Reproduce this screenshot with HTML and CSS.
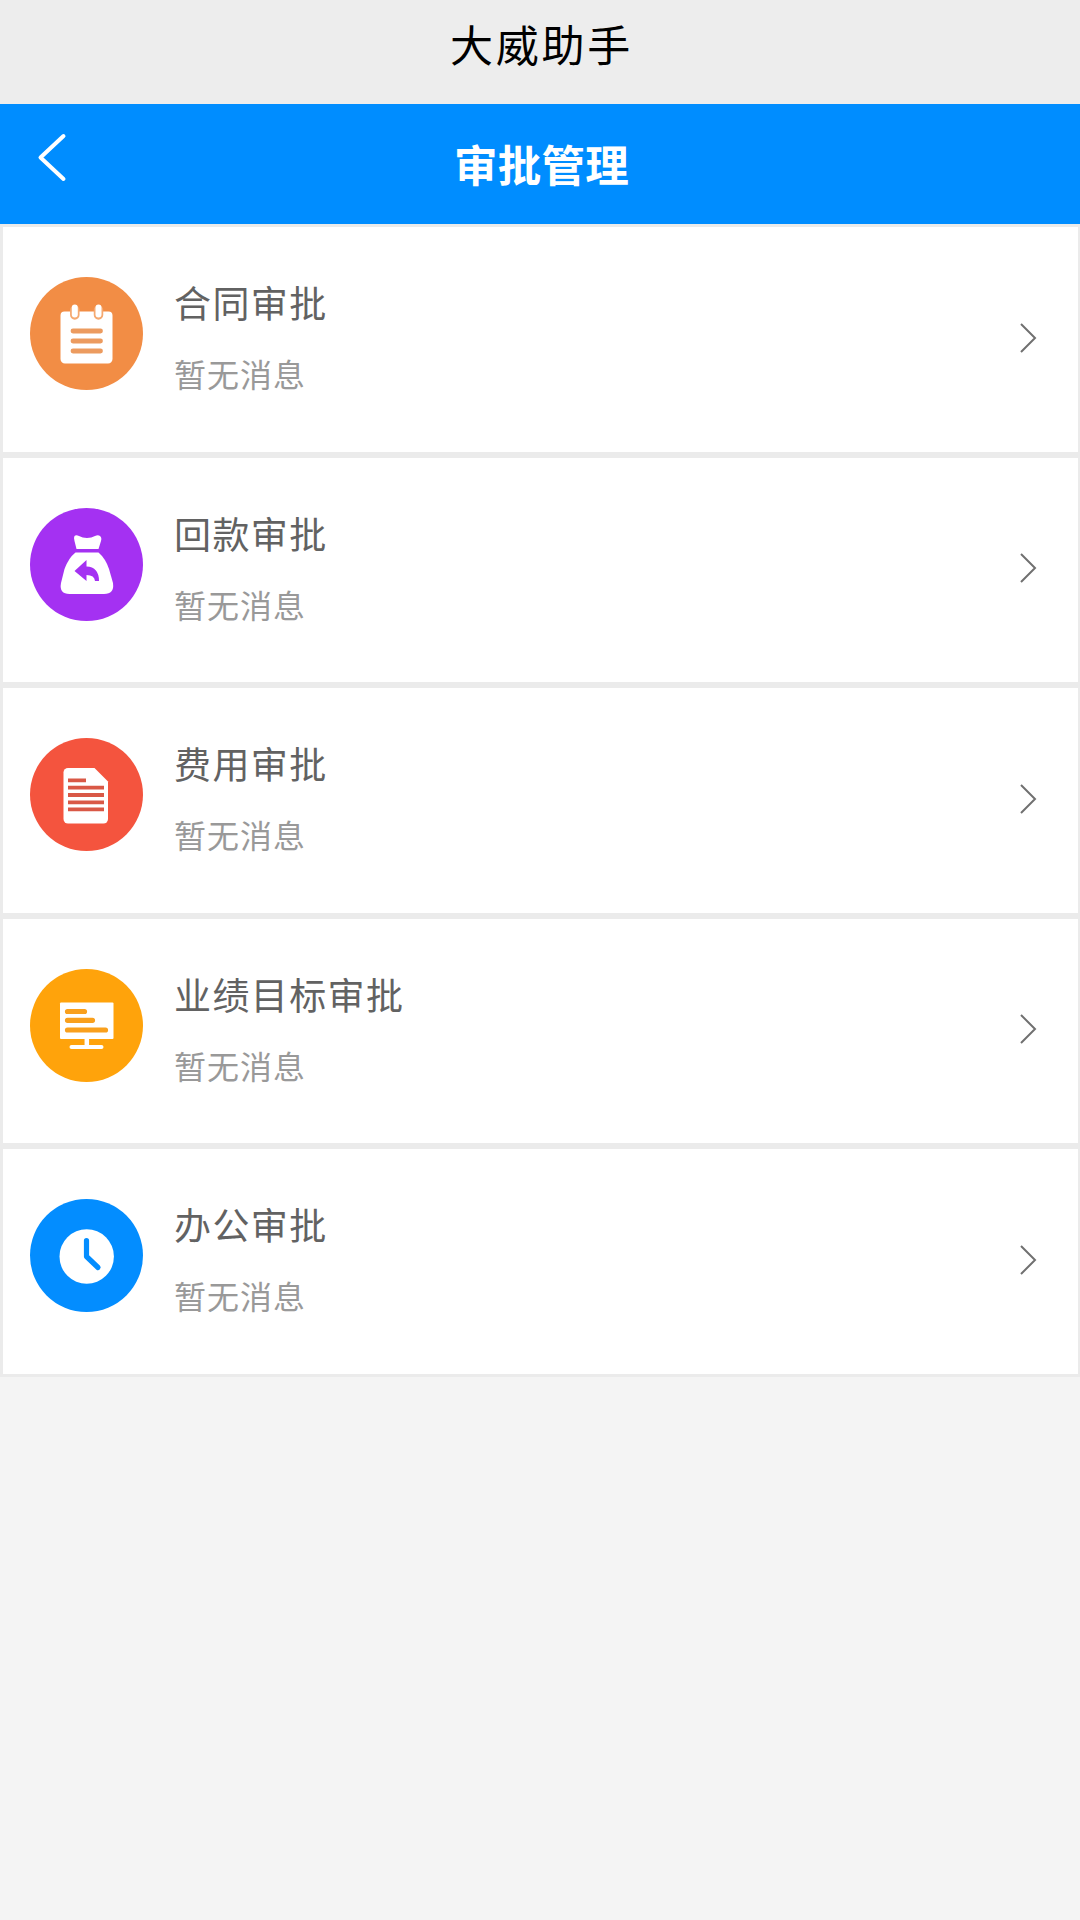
FILE: index.html
```html
<!DOCTYPE html>
<html lang="zh-CN">
<head>
    <meta charset="UTF-8">
    <meta name="viewport" content="width=device-width, initial-scale=1.0">
    <title>大威助手</title>
    <link rel="stylesheet" href="styles.css">
</head>
<body>
    <div class="app-title">大威助手</div>

    <header class="navbar">
        <svg class="back" viewBox="0 0 32 52">
            <path d="M28.500 5 L5.500 26.500 L28.500 48"/>
        </svg>
        <h1>审批管理</h1>
    </header>

    <div class="list">
        <div class="item">
            <svg class="icon" viewBox="0 0 113 113">
                <circle cx="56.500" cy="56.500" r="56.500" fill="#f28d45"/>
                <path d="M34.500 34.500h44a4 4 0 0 1 4 4v43.500a4.500 4.500 0 0 1-4.500 4.500h-43a4.500 4.500 0 0 1-4.500-4.500v-43.500a4 4 0 0 1 4-4z" fill="#fff"/>
                <path d="M44.800 33v5M68.500 33v5" stroke="#f5a970" stroke-width="9.500" stroke-linecap="round"/>
                <path d="M44.800 30.500v7M68.500 30.500v7" stroke="#fff" stroke-width="6" stroke-linecap="round"/>
                <path d="M43 54h27.500M43 64h27.500M43 74h27.500" stroke="#ec9b5f" stroke-width="4.800" stroke-linecap="round"/>
            </svg>
            <div class="info">
                <div class="name">合同审批</div>
                <div class="message">暂无消息</div>
            </div>
            <svg class="arrow" viewBox="0 0 18 32"><path d="M2 2l14 14-14 14"/></svg>
        </div>

        <div class="item">
            <svg class="icon" viewBox="0 0 113 113">
                <circle cx="56.500" cy="56.500" r="56.500" fill="#a431f2"/>
                <path d="M44.500 28q1.500-1.500 4.500 0q3.500 2 8 2t8-2q3-1.500 5 0q2 1.500 1 5l-2.500 8h-22l-2-8q-1-3.500 0-5z" fill="#fff"/>
                <path d="M45.500 44.500h23q7 6 10.500 16.500l4 14q1.500 11-9 11h-34.500q-10.500 0-8.500-11l3.500-14q4-11 11-16.500z" fill="#fff"/>
                <path d="M44.500 63l12-11v6.500q12.500.5 12.500 14.500h-4q-.5-6-8.500-6v6z" fill="#a431f2"/>
            </svg>
            <div class="info">
                <div class="name">回款审批</div>
                <div class="message">暂无消息</div>
            </div>
            <svg class="arrow" viewBox="0 0 18 32"><path d="M2 2l14 14-14 14"/></svg>
        </div>

        <div class="item">
            <svg class="icon" viewBox="0 0 113 113">
                <circle cx="56.500" cy="56.500" r="56.500" fill="#f4543e"/>
                <path d="M38 30h26.500l13.500 13.500v37.500a4.500 4.500 0 0 1-4.500 4.500h-35.500a4.500 4.500 0 0 1-4.500-4.500v-46.500a4.500 4.500 0 0 1 4.500-4.500z" fill="#fff"/>
                <path d="M38 42.300h18M38 49.700h36M38 57h36M38 64.300h36M38 71.300h36" stroke="#d95846" stroke-width="3.800"/>
            </svg>
            <div class="info">
                <div class="name">费用审批</div>
                <div class="message">暂无消息</div>
            </div>
            <svg class="arrow" viewBox="0 0 18 32"><path d="M2 2l14 14-14 14"/></svg>
        </div>

        <div class="item">
            <svg class="icon" viewBox="0 0 113 113">
                <circle cx="56.500" cy="56.500" r="56.500" fill="#ffa30b"/>
                <rect x="30" y="33.500" width="53.500" height="36.500" rx="1" fill="#fff"/>
                <path d="M56.800 69v9" stroke="#fff" stroke-width="4.500"/>
                <path d="M41.500 78h30" stroke="#fff" stroke-width="4" stroke-linecap="round"/>
                <path d="M37.500 42.500h17M37.500 51.300h25M37.500 61h38" stroke="#f9a01d" stroke-width="5.200" stroke-linecap="round"/>
            </svg>
            <div class="info">
                <div class="name">业绩目标审批</div>
                <div class="message">暂无消息</div>
            </div>
            <svg class="arrow" viewBox="0 0 18 32"><path d="M2 2l14 14-14 14"/></svg>
        </div>

        <div class="item">
            <svg class="icon" viewBox="0 0 113 113">
                <circle cx="56.500" cy="56.500" r="56.500" fill="#038dff"/>
                <circle cx="56.700" cy="57.500" r="27.200" fill="#fff"/>
                <path d="M56.500 41.500v16l11.500 11" fill="none" stroke="#038dff" stroke-width="5.200" stroke-linecap="round" stroke-linejoin="round"/>
            </svg>
            <div class="info">
                <div class="name">办公审批</div>
                <div class="message">暂无消息</div>
            </div>
            <svg class="arrow" viewBox="0 0 18 32"><path d="M2 2l14 14-14 14"/></svg>
        </div>
    </div>
</body>
</html>
```
FILE: styles.css
```css
* {
    box-sizing: border-box;
}

body {
    margin: 0;
    background: #f4f4f4;
    font-family: "Noto Sans CJK SC", sans-serif;
}

.app-title {
    height: 103.5px;
    padding-left: 3px;
    line-height: 86px;
    text-align: center;
    font-size: 43px;
    letter-spacing: 2.8px;
    color: #000;
    background: #ededed;
}

.navbar {
    display: flex;
    align-items: center;
    height: 120.8px;
    padding: 0 35px;
    color: #fff;
    background: #008dff;
}

.navbar h1 {
    flex: 1;
    margin: 0 29px 0 0;
    text-align: center;
    font-size: 43.5px;
    line-height: 60px;
    font-weight: bold;
    letter-spacing: 0.3px;
}

.back {
    width: 32px;
    height: 52px;
    margin-bottom: 13px;
    fill: none;
    stroke: #fff;
    stroke-width: 4;
    stroke-linecap: round;
    stroke-linejoin: round;
}

.item {
    display: flex;
    align-items: flex-start;
    height: 230.5px;
    padding: 50px 41px 0 27px;
    background: #fff;
    border: 3px solid #ebebeb;
    border-right-width: 2px;
}

.icon {
    width: 113px;
    height: 113px;
}

.info {
    flex: 1;
    margin-left: 31px;
}

.name {
    margin-top: -2px;
    font-size: 37px;
    line-height: 54px;
    letter-spacing: 1.4px;
    color: #626262;
}

.message {
    margin-top: 21px;
    font-size: 32px;
    line-height: 46px;
    letter-spacing: 1px;
    color: #999;
}

.arrow {
    width: 18px;
    height: 32px;
    margin-top: 44.5px;
    fill: none;
    stroke: #707070;
    stroke-width: 2;
}
```
